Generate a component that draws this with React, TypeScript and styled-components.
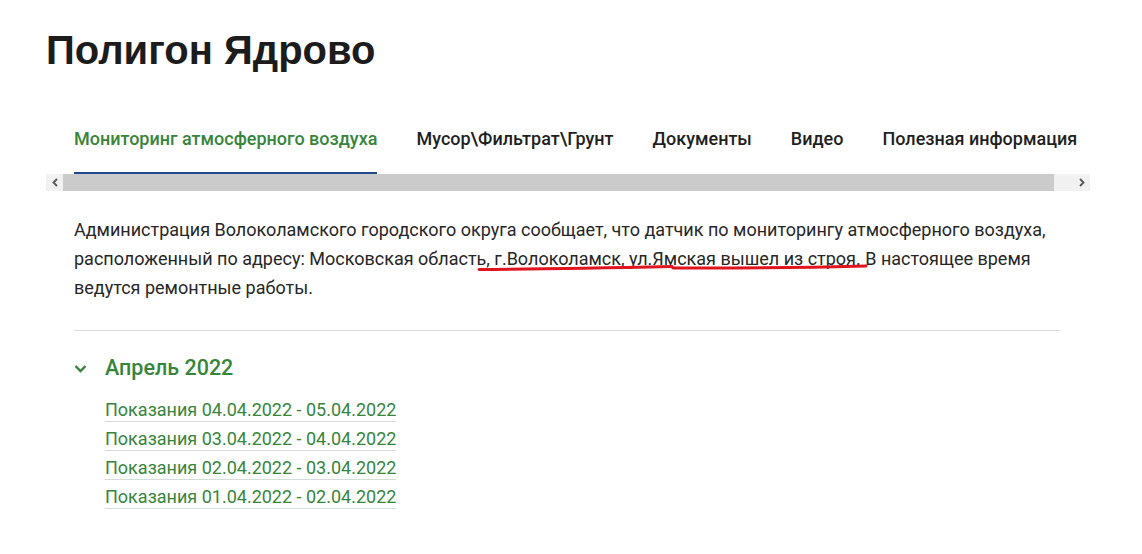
import React from "react";
import styled, { createGlobalStyle } from "styled-components";

const GlobalStyle = createGlobalStyle`
  html, body { margin: 0; padding: 0; background: #ffffff; }
  body { font-family: Roboto, "Liberation Sans", Arial, sans-serif; color: #222; }
`;

const GREEN = "#36853b";

const Page = styled.div`
  width: 1044px;
  padding: 26px 0 40px 46px;
`;

const Title = styled.h1`
  margin: 0;
  font-family: "Liberation Sans", Arial, sans-serif;
  font-weight: 700;
  font-size: 40px;
  line-height: 48px;
  color: #1c1c1c;
`;

const TabBar = styled.nav`
  margin-top: 50px;
  display: flex;
  gap: 39px;
  padding: 0 28px;
  white-space: nowrap;
`;

const Tab = styled.a<{ $active?: boolean }>`
  display: block;
  padding: 4px 0 22px;
  font-family: Roboto, sans-serif;
  font-weight: 500;
  font-size: 18px;
  line-height: 22px;
  color: ${(p) => (p.$active ? GREEN : "#1f1f1f")};
  border-bottom: 2px solid ${(p) => (p.$active ? "#1f4a8a" : "transparent")};
  text-decoration: none;
  cursor: pointer;
`;

const ScrollBar = styled.div`
  display: flex;
  height: 17px;
  background: #f1f1f1;
`;

const ScrollButton = styled.div`
  width: 17px;
  flex: none;
  display: flex;
  align-items: center;
  justify-content: center;
  background: #f1f1f1;
`;

const Thumb = styled.div`
  flex: none;
  width: 991px;
  background: #cbcbcb;
`;

const Track = styled.div`
  flex: 1;
`;

const Content = styled.section`
  padding: 0 30px 0 28px;
`;

const Notice = styled.p`
  position: relative;
  margin: 24px 0 0;
  font-size: 18px;
  line-height: 29px;
  color: #262626;
`;

const Annotation = styled.svg`
  position: absolute;
  left: -74px;
  top: -214px;
  width: 1142px;
  height: 554px;
  pointer-events: none;
  overflow: visible;
`;

const Divider = styled.hr`
  margin: 28px 0 0;
  border: 0;
  border-top: 1px solid #dadada;
`;

const Accordion = styled.div`
  margin-top: 22px;
`;

const AccordionHeader = styled.div`
  display: flex;
  align-items: center;
  gap: 18px;
  height: 30px;
  color: ${GREEN};
`;

const AccordionTitle = styled.h3`
  margin: 0;
  font-weight: 500;
  font-size: 21.5px;
  line-height: 30px;
  color: ${GREEN};
`;

const LinkList = styled.ul`
  list-style: none;
  margin: 16px 0 0;
  padding: 0 0 0 31px;
`;

const LinkItem = styled.li`
  margin-bottom: 6px;
`;

const ReadingLink = styled.a`
  display: inline-block;
  font-size: 18px;
  line-height: 22px;
  color: ${GREEN};
  text-decoration: none;
  border-bottom: 1px solid #d3ddd8;
`;

const tabs = [
  "Мониторинг атмосферного воздуха",
  "Мусор\\Фильтрат\\Грунт",
  "Документы",
  "Видео",
  "Полезная информация",
];

const readings = [
  "Показания 04.04.2022 - 05.04.2022",
  "Показания 03.04.2022 - 04.04.2022",
  "Показания 02.04.2022 - 03.04.2022",
  "Показания 01.04.2022 - 02.04.2022",
];

export default function App() {
  return (
    <>
      <GlobalStyle />
      <Page>
        <Title>Полигон Ядрово</Title>
        <TabBar>
          {tabs.map((t, i) => (
            <Tab key={t} $active={i === 0}>
              {t}
            </Tab>
          ))}
        </TabBar>
        <ScrollBar>
          <ScrollButton>
            <svg width="8" height="9" viewBox="0 0 8 9">
              <path d="M6 1 L2.5 4.5 L6 8" fill="none" stroke="#555" strokeWidth="1.8" />
            </svg>
          </ScrollButton>
          <Thumb />
          <Track />
          <ScrollButton>
            <svg width="8" height="9" viewBox="0 0 8 9">
              <path d="M2 1 L5.5 4.5 L2 8" fill="none" stroke="#555" strokeWidth="1.8" />
            </svg>
          </ScrollButton>
        </ScrollBar>
        <Content>
          <Notice>
            Администрация Волоколамского городского округа сообщает, что датчик по мониторингу
            атмосферного воздуха, расположенный по адресу: Московская область, г.Волоколамск,
            ул.Ямская вышел из строя. В настоящее время ведутся ремонтные работы.
            <Annotation viewBox="0 0 1142 554">
              <path
                d="M479 268.5 Q560 268 672 265.5"
                fill="none"
                stroke="#e0141f"
                strokeWidth="3"
                strokeLinecap="round"
              />
              <path
                d="M673 267 Q770 267.5 866 265"
                fill="none"
                stroke="#e0141f"
                strokeWidth="3"
                strokeLinecap="round"
              />
            </Annotation>
          </Notice>
          <Divider />
          <Accordion>
            <AccordionHeader>
              <svg width="13" height="9" viewBox="0 0 13 9">
                <path d="M1.5 2 L6.5 7 L11.5 2" fill="none" stroke={GREEN} strokeWidth="2.4" />
              </svg>
              <AccordionTitle>Апрель 2022</AccordionTitle>
            </AccordionHeader>
            <LinkList>
              {readings.map((r) => (
                <LinkItem key={r}>
                  <ReadingLink>{r}</ReadingLink>
                </LinkItem>
              ))}
            </LinkList>
          </Accordion>
        </Content>
      </Page>
    </>
  );
}
